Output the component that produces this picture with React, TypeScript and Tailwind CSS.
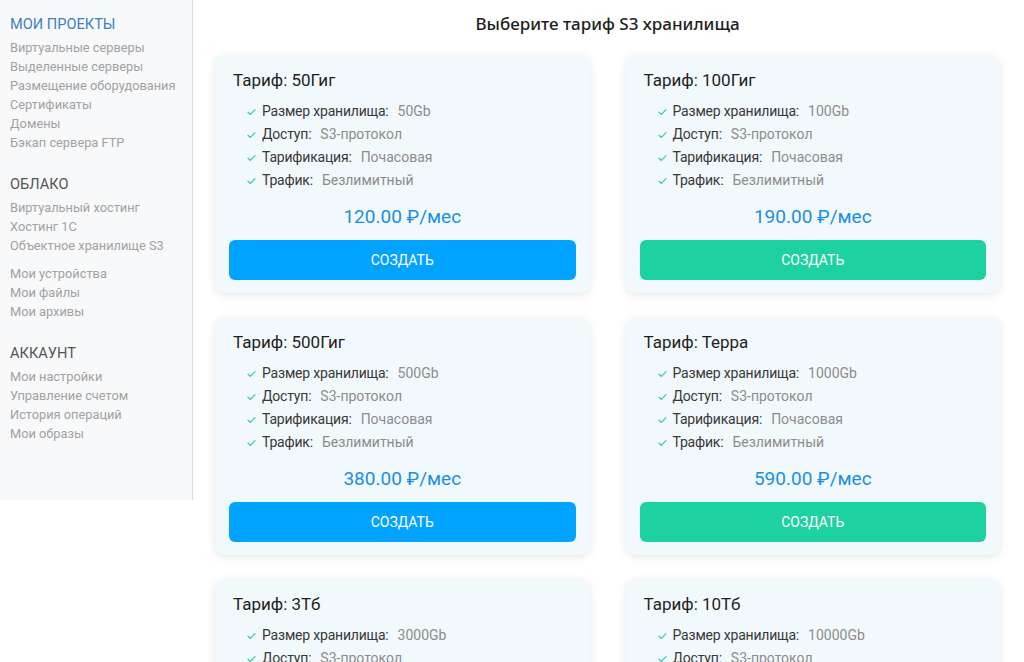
import React from "react"

type Plan = {
  name: string
  size: string
  price: string
  color: "blue" | "green"
}

const plans: Plan[] = [
  { name: "50Гиг", size: "50Gb", price: "120.00", color: "blue" },
  { name: "100Гиг", size: "100Gb", price: "190.00", color: "green" },
  { name: "500Гиг", size: "500Gb", price: "380.00", color: "blue" },
  { name: "Терра", size: "1000Gb", price: "590.00", color: "green" },
  { name: "3Тб", size: "3000Gb", price: "990.00", color: "blue" },
  { name: "10Тб", size: "10000Gb", price: "2990.00", color: "green" },
]

const menu: { title?: string; links: string[] }[] = [
  {
    title: "Мои проекты",
    links: [
      "Виртуальные серверы",
      "Выделенные серверы",
      "Размещение оборудования",
      "Сертификаты",
      "Домены",
      "Бэкап сервера FTP",
    ],
  },
  { title: "Облако", links: ["Виртуальный хостинг", "Хостинг 1С", "Объектное хранилище S3"] },
  { links: ["Мои устройства", "Мои файлы", "Мои архивы"] },
  { title: "Аккаунт", links: ["Мои настройки", "Управление счетом", "История операций", "Мои образы"] },
]

function Check() {
  return (
    <svg width="9" height="8" viewBox="0 0 9 8" className="mr-[6px] shrink-0">
      <path d="M1 4.3 L3.4 6.4 L8 1.6" fill="none" stroke="#3fcf9f" strokeWidth="1.3" strokeLinecap="round" strokeLinejoin="round" />
    </svg>
  )
}

function Sidebar() {
  return (
    <aside className="w-[193px] shrink-0 self-start bg-[#f8f9fa] border-r border-[#dcdcdc] pl-[10px] pt-[14px] pb-[57px]">
      {menu.map((group, i) => (
        <div key={i} className={i === 0 ? "" : group.title ? "mt-[22px]" : "mt-[9px]"}>
          {group.title && (
            <div
              className={`uppercase text-[14.6px] leading-[20px] mb-[4px] ${
                i === 0 ? "text-[#3c7fc6]" : "text-[#555555]"
              }`}
            >
              {group.title}
            </div>
          )}
          {group.links.map((l) => (
            <a key={l} href="#" className="block text-[12.8px] leading-[19px] text-[#a2a2a2] whitespace-nowrap">
              {l}
            </a>
          ))}
        </div>
      ))}
    </aside>
  )
}

function Card({ plan }: { plan: Plan }) {
  const rows: [string, string][] = [
    ["Размер хранилища:", plan.size],
    ["Доступ:", "S3-протокол"],
    ["Тарификация:", "Почасовая"],
    ["Трафик:", "Безлимитный"],
  ]
  return (
    <div className="bg-[#f2f9fd] rounded-[10px] shadow-[0_2px_10px_rgba(0,0,0,0.1)] px-[14px] pt-[13px] pb-[13px]">
      <div className="pl-[4px] text-[17px] leading-[24px] text-[#1f1f1f]">Тариф: {plan.name}</div>
      <ul className="mt-[8px] pl-[18px]">
        {rows.map(([k, v]) => (
          <li key={k} className="flex items-center text-[14px] leading-[23px]">
            <Check />
            <span className="text-[#383838] tracking-[-0.2px]">{k}</span>
            <span className="ml-[9px] text-[#8c8c8c]">{v}</span>
          </li>
        ))}
      </ul>
      <div className="mt-[12px] text-center text-[19px] leading-[26px] text-[#1b8fe3]">{plan.price} ₽/мес</div>
      <button
        className={`mt-[10px] w-full h-[40px] rounded-[6px] text-white text-[14px] uppercase ${
          plan.color === "blue" ? "bg-[#00a3ff]" : "bg-[#1dd1a1]"
        }`}
      >
        Создать
      </button>
    </div>
  )
}

export default function App() {
  return (
    <div className="flex min-h-screen bg-white font-['Roboto',sans-serif]">
      <Sidebar />
      <main className="flex-1 pl-[22px] pr-[24px]">
        <h1 className="pt-[13px] text-center text-[17px] leading-[22px] font-medium text-[#1e1e1e] font-['Noto_Sans',sans-serif]">
          Выберите тариф S3 хранилища
        </h1>
        <div className="mt-[20px] grid grid-cols-2 gap-x-[36px] gap-y-[24px]">
          {plans.map((p) => (
            <Card key={p.name} plan={p} />
          ))}
        </div>
      </main>
    </div>
  )
}
